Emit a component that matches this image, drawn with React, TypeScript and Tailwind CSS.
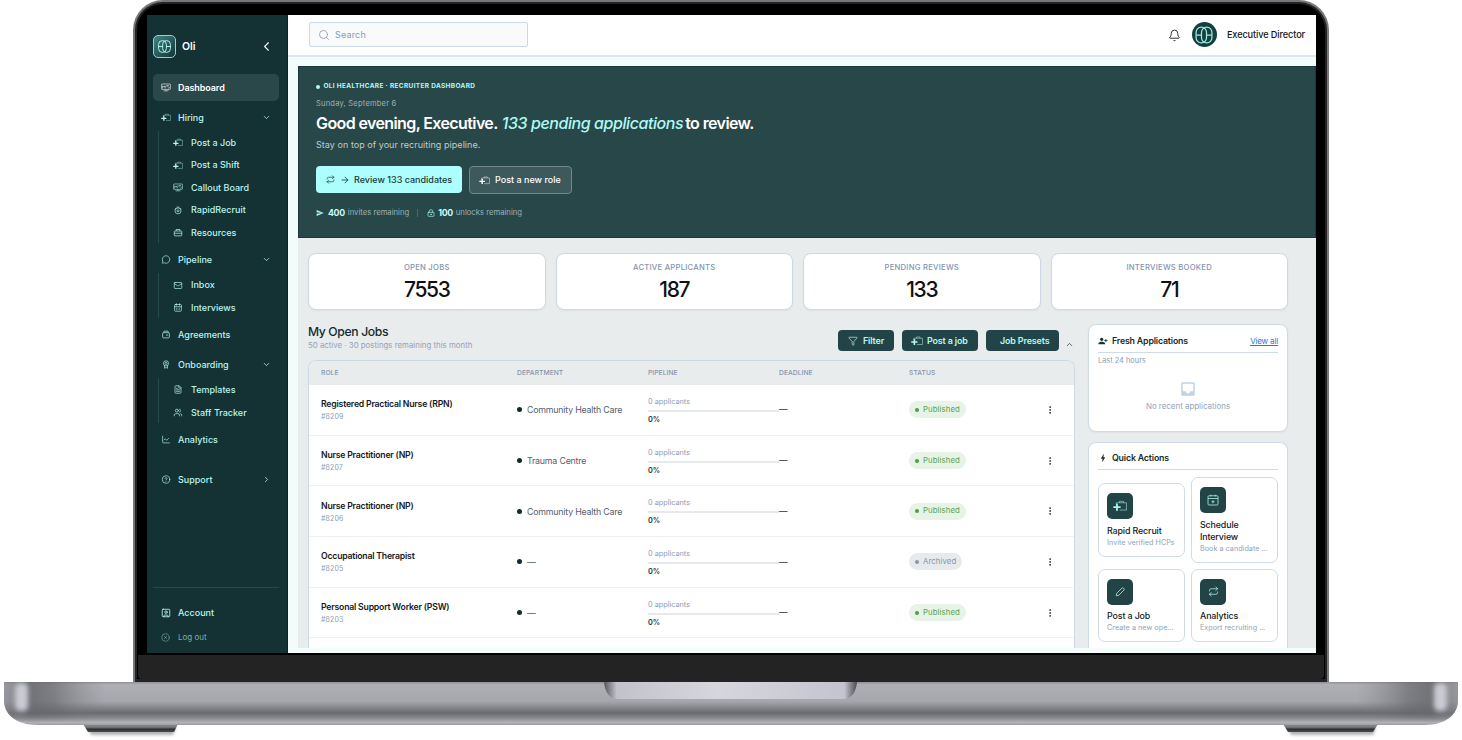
import React from 'react';
import {
  ArrowRight,
  Bell,
  CalendarDays,
  ChartLine,
  ChevronDown,
  ChevronLeft,
  ChevronRight,
  ChevronUp,
  CircleX,
  EllipsisVertical,
  FileText,
  Funnel,
  HelpCircle,
  LockKeyhole,
  Mail,
  MessageCircle,
  Repeat,
  Search,
  SquareUser,
  Users,
} from 'lucide-react';
import { MdBolt, MdInbox, MdPersonAddAlt1, MdSend } from 'react-icons/md';

type IconType = React.ComponentType<{ className?: string; strokeWidth?: number }>;

const BoardIcon: React.FC<{ className?: string }> = ({ className }) => (
  <svg viewBox="0 0 24 20" fill="none" stroke="currentColor" strokeWidth="1.4" className={className}>
    <rect x="1.5" y="1.5" width="21" height="13" rx="1" />
    <path d="M4 12V6l3 3 3-3v6M13 5h6M13 8h3M18 8l2 2-3 2M6 18h12M12 15v3" />
  </svg>
);

const CasePlusIcon: React.FC<{ className?: string }> = ({ className }) => (
  <svg viewBox="0 0 24 20" fill="none" stroke="currentColor" className={className}>
    <path d="M5.5 7V4.5H23V17H11.5" strokeWidth="1.3" opacity="0.75" />
    <path d="M11 4.5V2h7v2.5" strokeWidth="1.3" opacity="0.75" />
    <path d="M0.5 12h12.5M6.75 6v12" strokeWidth="3.2" />
  </svg>
);

const RapidIcon: React.FC<{ className?: string }> = ({ className }) => (
  <svg viewBox="0 0 24 24" fill="none" stroke="currentColor" strokeWidth="1.8" className={className}>
    <circle cx="12" cy="13" r="8" />
    <path d="M8 3h8M3 9l3-3M21 9l-3-3M9 12l3-2 3 2v2l-3 2-3-2z" />
  </svg>
);

const CaseIcon: React.FC<{ className?: string }> = ({ className }) => (
  <svg viewBox="0 0 24 24" fill="none" stroke="currentColor" strokeWidth="1.9" className={className}>
    <rect x="2" y="8" width="20" height="13" rx="2" />
    <path d="M7 8V4h10v4M2 14h20" />
  </svg>
);

const AgreementIcon: React.FC<{ className?: string }> = ({ className }) => (
  <svg viewBox="0 0 24 24" fill="none" stroke="currentColor" strokeWidth="1.9" className={className}>
    <rect x="3" y="7" width="18" height="14" rx="2.5" />
    <path d="M5 7l2-4h10l2 4M12 13.5h6" />
  </svg>
);

const AwardIcon: React.FC<{ className?: string }> = ({ className }) => (
  <svg viewBox="0 0 24 24" fill="none" stroke="currentColor" strokeWidth="1.8" className={className}>
    <circle cx="12" cy="9" r="7" />
    <circle cx="12" cy="9" r="3" />
    <path d="M8 15v7l4-2 4 2v-7" />
  </svg>
);

const CalendarAddIcon: React.FC<{ className?: string }> = ({ className }) => (
  <svg viewBox="0 0 24 24" fill="none" stroke="currentColor" strokeWidth="1.6" className={className}>
    <rect x="2" y="3.5" width="20" height="18.5" rx="2" />
    <path d="M2 9h20M7.5 1.5V5M16.5 1.5V5M12 12.5v6M9 15.5h6" />
  </svg>
);

const PenIcon: React.FC<{ className?: string }> = ({ className }) => (
  <svg viewBox="0 0 24 24" fill="none" stroke="currentColor" strokeWidth="1.9" strokeLinejoin="round" className={className}>
    <path d="M3 21l1.2-6L16.5 2.7a2.5 2.5 0 0 1 3.6 0l1.2 1.2a2.5 2.5 0 0 1 0 3.6L9 19.8z" />
  </svg>
);

const OliMark: React.FC<{ className?: string }> = ({ className }) => (
  <svg viewBox="0 0 24 24" fill="none" stroke="currentColor" strokeWidth="1.5" className={className}>
    <rect x="2.5" y="2.5" width="12.5" height="19" rx="6.25" />
    <rect x="9" y="2.5" width="12.5" height="19" rx="6.25" />
    <path d="M2.5 12H9M15 12h6.5" />
  </svg>
);

interface NavItem {
  label: string;
  icon: IconType;
}

interface NavGroup extends NavItem {
  children?: NavItem[];
  chevron?: 'down' | 'right';
  active?: boolean;
  spaced?: boolean;
}

const nav: NavGroup[] = [
  { label: 'Dashboard', icon: BoardIcon, active: true },
  {
    label: 'Hiring',
    icon: CasePlusIcon,
    chevron: 'down',
    children: [
      { label: 'Post a Job', icon: CasePlusIcon },
      { label: 'Post a Shift', icon: CasePlusIcon },
      { label: 'Callout Board', icon: BoardIcon },
      { label: 'RapidRecruit', icon: RapidIcon },
      { label: 'Resources', icon: CaseIcon },
    ],
  },
  {
    label: 'Pipeline',
    icon: MessageCircle,
    chevron: 'down',
    children: [
      { label: 'Inbox', icon: Mail },
      { label: 'Interviews', icon: CalendarDays },
    ],
  },
  { label: 'Agreements', icon: AgreementIcon },
  {
    label: 'Onboarding',
    icon: AwardIcon,
    chevron: 'down',
    children: [
      { label: 'Templates', icon: FileText },
      { label: 'Staff Tracker', icon: Users },
    ],
  },
  { label: 'Analytics', icon: ChartLine },
  { label: 'Support', icon: HelpCircle, chevron: 'right', spaced: true },
];

const stats = [
  { label: 'OPEN JOBS', value: '7553' },
  { label: 'ACTIVE APPLICANTS', value: '187' },
  { label: 'PENDING REVIEWS', value: '133' },
  { label: 'INTERVIEWS BOOKED', value: '71' },
];

const jobs = [
  { role: 'Registered Practical Nurse (RPN)', id: '#8209', department: 'Community Health Care', status: 'Published' },
  { role: 'Nurse Practitioner (NP)', id: '#8207', department: 'Trauma Centre', status: 'Published' },
  { role: 'Nurse Practitioner (NP)', id: '#8206', department: 'Community Health Care', status: 'Published' },
  { role: 'Occupational Therapist', id: '#8205', department: '—', status: 'Archived' },
  { role: 'Personal Support Worker (PSW)', id: '#8203', department: '—', status: 'Published' },
];

const quickActions: { title: string; text: string; icon: IconType; iconClass: string }[] = [
  { title: 'Rapid Recruit', text: 'Invite verified HCPs', icon: CasePlusIcon, iconClass: 'w-[14px] h-3' },
  { title: 'Schedule Interview', text: 'Book a candidate ...', icon: CalendarAddIcon, iconClass: 'size-3' },
  { title: 'Post a Job', text: 'Create a new ope...', icon: PenIcon, iconClass: 'size-[10px]' },
  { title: 'Analytics', text: 'Export recruiting ...', icon: Repeat, iconClass: 'size-[11px]' },
];

const Sidebar = () => (
  <aside className="flex w-[141px] shrink-0 flex-col border-r border-[#0a2224] bg-[#143133] pt-5 pr-2 pl-1.5 text-[#b9f5ef]">
    <div className="flex h-[23px] shrink-0 items-center">
      <div className="flex size-[23px] items-center justify-center rounded-[5px] border border-[#8fd5cf] bg-linear-to-br from-[#3f8a87] to-[#123436]">
        <OliMark className="size-[15px]" />
      </div>
      <span className="ml-1.5 text-[10.5px] font-semibold text-white">Oli</span>
      <ChevronLeft className="mr-[5px] ml-auto size-[15px] text-white" strokeWidth={1.7} />
    </div>

    <nav className="mt-4">
      {nav.map(({ label, icon: Icon, children, chevron, active, spaced }) => (
        <div key={label} className={`mb-[2.9px] ${spaced ? 'mt-[13px]' : ''}`}>
          <div
            className={`flex h-[27px] items-center rounded-[5px] px-2 text-[9px] ${
              active ? 'bg-[#2a4749] font-semibold text-white' : 'font-medium'
            }`}
          >
            <Icon className="h-[9px] w-[10px]" strokeWidth={1.7} />
            <span className={active ? 'ml-[7px] tracking-[-0.01em]' : 'ml-[7px]'}>{label}</span>
            {chevron === 'down' && <ChevronDown className="ml-auto size-[9px]" strokeWidth={2} />}
            {chevron === 'right' && <ChevronRight className="ml-auto size-[9px]" strokeWidth={2} />}
          </div>
          {children && (
            <div className="ml-[5px] border-l border-[#264a4b]">
              {children.map(({ label: childLabel, icon: ChildIcon }) => (
                <div key={childLabel} className="flex h-[22.5px] items-center pt-px pl-[14px] text-[9px] font-medium">
                  <ChildIcon className="h-[9px] w-[10px]" strokeWidth={1.8} />
                  <span className="ml-2">{childLabel}</span>
                </div>
              ))}
            </div>
          )}
        </div>
      ))}
    </nav>

    <div className="mt-auto border-t border-[#2b4748] pt-[12px] pl-2">
      <div className="flex h-[25px] items-center text-[9px] font-medium">
        <SquareUser className="size-[10px]" strokeWidth={2} />
        <span className="ml-[7px]">Account</span>
      </div>
      <div className="mb-1 flex h-6 items-center text-[8px] text-[#7fb0ac]">
        <CircleX className="size-[9px]" strokeWidth={1.6} />
        <span className="ml-2">Log out</span>
      </div>
    </div>
  </aside>
);

const Header = () => (
  <header className="flex h-[42px] shrink-0 items-center border-b-2 border-[#dde7ee] bg-white pr-[11px] pl-[21px]">
    <div className="mb-px flex h-[25px] w-[219px] items-center rounded-[2px] border border-[#cbd9e8] bg-[#f8fafc] pl-2 text-[#8c9bb5]">
      <Search className="size-3" strokeWidth={1.6} />
      <span className="mt-px ml-[5px] text-[9px] tracking-[0.02em]">Search</span>
    </div>
    <Bell className="ml-auto size-[13px] text-[#1a1f24]" strokeWidth={1.7} />
    <div className="mb-px ml-[11px] flex size-[25px] items-center justify-center rounded-full bg-[#12403f] text-[#a5e6e1]">
      <OliMark className="size-[20px]" />
    </div>
    <span className="ml-[10px] text-[9.2px] font-medium tracking-[-0.013em] text-[#111418]">Executive Director</span>
  </header>
);

const Hero = () => (
  <section className="h-[172px] shrink-0 border border-[#173b3d] bg-[#284749] pt-[15px] pl-[17px] text-white">
    <div className="flex h-[10px] items-center text-[6.5px] font-bold tracking-[0.05em] text-[#aefaf5]">
      <span className="mr-[3.5px] mb-px size-1 rounded-full bg-[#aefaf5]" />
      OLI HEALTHCARE · RECRUITER DASHBOARD
    </div>
    <p className="mt-[6px] h-3 text-[7.5px] leading-3 tracking-[0.03em] text-[#a3b3b4]">Sunday, September 6</p>
    <h1 className="mt-[3px] flex h-5 text-[16px] leading-5 font-semibold tracking-[-0.038em] whitespace-nowrap">
      <span>Good evening, Executive.</span>
      <em className="ml-1 font-medium tracking-[-0.027em] text-[#aefaf5]">133 pending applications</em>
      <span className="ml-[2px]">to review.</span>
    </h1>
    <p className="mt-[6px] h-3 text-[9px] leading-3 tracking-[0.005em] text-[#c0cbcb]">
      Stay on top of your recruiting pipeline.
    </p>
    <div className="mt-[15px] flex h-7 text-[9px] font-medium">
      <button className="flex h-[27px] w-[146px] items-center rounded-[4px] bg-[#acfffc] pl-[10px] text-[#173a3c]">
        <Repeat className="size-[9px]" strokeWidth={1.8} />
        <ArrowRight className="ml-[5px] size-[10px]" strokeWidth={2} />
        <span className="ml-1 whitespace-nowrap">Review 133 candidates</span>
      </button>
      <button className="ml-[7px] flex h-7 w-[103px] items-center rounded-[4px] border border-[#71898a] bg-[#3d595b] pl-[9px]">
        <CasePlusIcon className="h-[9px] w-[11px]" />
        <span className="ml-[5px] whitespace-nowrap">Post a new role</span>
      </button>
    </div>
    <div className="mt-3 flex h-[13px] items-center text-[7.7px] text-[#9eafb0]">
      <MdSend className="size-2 text-[#aefaf5]" />
      <b className="mr-[3px] ml-1 text-[8.8px] font-bold tracking-[-0.04em] text-[#c8fbf8]">400</b>
      <span>invites remaining</span>
      <span className="mr-[9px] ml-[8px] h-2 w-px bg-[#4a6668]" />
      <LockKeyhole className="size-2 text-[#aefaf5]" />
      <b className="mr-[3px] ml-[3px] text-[8.8px] font-bold tracking-[-0.04em] text-[#c8fbf8]">100</b>
      <span>unlocks remaining</span>
    </div>
  </section>
);

const JobsTable = () => (
  <div className="mt-[9px] min-h-0 flex-1 overflow-hidden rounded-t-[8px] border border-b-0 border-[#cdd8e6] bg-white">
    <div className="grid h-[24px] grid-cols-[196px_131px_131px_130px_1fr] items-center bg-[#e8ecec] pt-px pl-3 text-[6.7px] font-medium tracking-[0.01em] text-[#8494ae]">
      <span>ROLE</span>
      <span>DEPARTMENT</span>
      <span>PIPELINE</span>
      <span>DEADLINE</span>
      <span>STATUS</span>
    </div>
    {jobs.map((job) => (
      <div
        key={job.id}
        className="grid h-[50.7px] grid-cols-[196px_131px_131px_130px_1fr] items-center border-b border-[#f0f2f3] pl-3"
      >
        <div className="pt-px">
          <div className="text-[8.7px] leading-3 font-semibold tracking-[-0.024em] text-[#16191d]">{job.role}</div>
          <div className="mt-[2px] text-[7px] leading-[10px] tracking-[0.02em] text-[#8c9bb5]">{job.id}</div>
        </div>
        <div className="flex items-center text-[8.8px] tracking-[-0.022em] text-[#55606f]">
          <span className="mr-[5px] size-[5px] rounded-full bg-[#0f2c2d]" />
          {job.department}
        </div>
        <div className="pt-[2px]">
          <div className="text-[7.3px] leading-[10px] text-[#8c9bb5]">0 applicants</div>
          <div className="mt-[3px] h-[2px] bg-[#e6eaeb]" />
          <div className="mt-[3px] text-[7.3px] leading-[10px] font-semibold text-[#1c3335]">0%</div>
        </div>
        <span className="text-[8.5px] text-[#2d3238]">—</span>
        <div className="flex items-center justify-between pr-[19px]">
          <span
            className={`flex h-[17px] items-center rounded-full px-[6px] text-[7.8px] tracking-[0.01em] ${
              job.status === 'Published' ? 'bg-[#e6f3e6] text-[#5aa552]' : 'bg-[#e6eaec] text-[#8696ab]'
            }`}
          >
            <span
              className={`mr-[4px] size-1 rounded-full ${job.status === 'Published' ? 'bg-[#4ba144]' : 'bg-[#8696ab]'}`}
            />
            {job.status}
          </span>
          <EllipsisVertical className="size-[10px] text-[#20252b]" strokeWidth={2} />
        </div>
      </div>
    ))}
  </div>
);

const JobsPanel = () => (
  <div className="flex w-[767px] flex-col">
    <div className="flex h-[27px] items-start">
      <div>
        <h2 className="text-[12.2px] leading-[16px] font-medium tracking-[-0.03em] text-[#122b2d]">My Open Jobs</h2>
        <p className="text-[7.8px] leading-[11px] tracking-[0.003em] text-[#95a2b9]">
          50 active · 30 postings remaining this month
        </p>
      </div>
      <div className="mt-[6px] mr-px ml-auto flex items-center text-[9px] font-semibold tracking-[-0.02em] text-[#b5f7f2]">
        <button className="flex h-[21px] w-[56px] items-center rounded-[4px] bg-[#234446] pl-[10px]">
          <Funnel className="size-[10px]" strokeWidth={1.6} />
          <span className="ml-[5px]">Filter</span>
        </button>
        <button className="ml-2 flex h-[21px] w-[76px] items-center rounded-[4px] bg-[#234446] pl-[9px]">
          <CasePlusIcon className="h-[10px] w-[12px]" />
          <span className="ml-[4px] whitespace-nowrap">Post a job</span>
        </button>
        <button className="ml-2 flex h-[21px] w-[73px] items-center rounded-[4px] bg-[#234446] pl-[14px] whitespace-nowrap">
          Job Presets
        </button>
        <ChevronUp className="mt-[8px] ml-[6px] size-[9px] text-[#30363d]" strokeWidth={2} />
      </div>
    </div>
    <JobsTable />
  </div>
);

const SideCards = () => (
  <div className="ml-[13px] flex min-h-0 w-[200px] flex-col">
    <div className="h-[108px] shrink-0 rounded-[8px] border border-[#cfdae8] bg-white px-[9px] pt-2 shadow-xs">
      <div className="flex h-[20px] items-center border-b border-[#cfdbe8] pb-1">
        <MdPersonAddAlt1 className="size-[10px] text-[#173032]" />
        <h3 className="ml-1 text-[8.8px] font-semibold tracking-[-0.02em] text-[#122b2d]">Fresh Applications</h3>
        <span className="ml-auto text-[8px] tracking-[-0.02em] text-[#1a7be0] underline">View all</span>
      </div>
      <p className="mt-[2px] text-[7.4px] leading-3 text-[#8c9bb5]">Last 24 hours</p>
      <div className="mt-[13px] flex flex-col items-center">
        <MdInbox className="size-[18px] text-[#c3d0e5]" />
        <p className="mt-[2px] text-[8px] leading-3 tracking-[-0.005em] text-[#96a3ba]">No recent applications</p>
      </div>
    </div>

    <div className="mt-[10px] min-h-0 flex-1 overflow-hidden rounded-t-[8px] border border-b-0 border-[#cfdae8] bg-white px-[9px] pt-2">
      <div className="flex h-[19px] items-center border-b border-[#cfdbe8] pb-1">
        <MdBolt className="size-[10px] text-[#173032]" />
        <h3 className="ml-1 text-[8.8px] font-semibold tracking-[-0.02em] text-[#122b2d]">Quick Actions</h3>
      </div>
      <div className="mt-[7px] grid grid-cols-2 items-center gap-[6px]">
        {quickActions.map(({ title, text, icon: Icon, iconClass }) => (
          <div key={title} className="rounded-[7px] border border-[#cfdbe8] bg-white px-2 pt-[9px] pb-2">
            <div className="flex size-[26px] items-center justify-center rounded-[5px] bg-[#234446] text-[#a9f3ee]">
              <Icon className={iconClass} strokeWidth={1.7} />
            </div>
            <div className="mt-[5.5px] text-[8.9px] leading-3 font-medium tracking-[-0.015em] text-[#16191d]">{title}</div>
            <div className="text-[7.2px] leading-[11px] tracking-[0.005em] whitespace-nowrap text-[#93a1b9]">{text}</div>
          </div>
        ))}
      </div>
    </div>
  </div>
);

// Silver base with the hinge notch and rubber feet
const LaptopBase = () => (
  <svg viewBox="0 0 1462 58" className="h-[58px] w-[1462px] shrink-0">
    <defs>
      <linearGradient id="base" x1="0" y1="0" x2="0" y2="1">
        <stop offset="0" stopColor="#8f9095" />
        <stop offset="0.06" stopColor="#aeafb5" />
        <stop offset="0.45" stopColor="#a6a7ad" />
        <stop offset="0.72" stopColor="#696a6f" />
        <stop offset="0.84" stopColor="#8a8b90" />
        <stop offset="0.94" stopColor="#b2b3b9" />
        <stop offset="1" stopColor="#9c9da1" />
      </linearGradient>
      <linearGradient id="ends" x1="0" y1="0" x2="1" y2="0">
        <stop offset="0" stopColor="#8a8b90" stopOpacity="0.6" />
        <stop offset="0.08" stopColor="#77787d" stopOpacity="0.6" />
        <stop offset="0.2" stopColor="#66676b" stopOpacity="0.85" />
        <stop offset="0.4" stopColor="#66676b" stopOpacity="0.65" />
        <stop offset="0.8" stopColor="#808186" stopOpacity="0" />
      </linearGradient>
      <linearGradient id="endsFade" x1="0" y1="0" x2="0" y2="1">
        <stop offset="0" stopColor="#fff" />
        <stop offset="0.65" stopColor="#fff" />
        <stop offset="0.95" stopColor="#000" />
      </linearGradient>
      <mask id="endsMask">
        <rect width="130" height="43" fill="url(#endsFade)" />
      </mask>
      <linearGradient id="notch" x1="0" y1="0" x2="1" y2="0">
        <stop offset="0" stopColor="#55565a" />
        <stop offset="0.05" stopColor="#c2c3ca" />
        <stop offset="0.45" stopColor="#d6d7dd" />
        <stop offset="0.95" stopColor="#c4c4cf" />
        <stop offset="1" stopColor="#4b4c50" />
      </linearGradient>
      <linearGradient id="foot" x1="0" y1="0" x2="0" y2="1">
        <stop offset="0" stopColor="#8d8e92" />
        <stop offset="0.4" stopColor="#77787c" />
        <stop offset="0.65" stopColor="#2f2f31" />
        <stop offset="1" stopColor="#4d4d4f" />
      </linearGradient>
      <filter id="soft" x="-10%" y="-50%" width="120%" height="250%">
        <feGaussianBlur stdDeviation="1.5" />
      </filter>
      <filter id="glow" x="-80%" y="-30%" width="260%" height="160%">
        <feGaussianBlur stdDeviation="2.6" />
      </filter>
      <clipPath id="bodyClip">
        <path d="M4 0h1454v18c0 14-11 25-34 25H38C15 43 4 32 4 18z" />
      </clipPath>
      <g id="end">
        <path d="M4 0h126v43H4z" fill="url(#ends)" mask="url(#endsMask)" />
        <rect x="15" y="1" width="13" height="28" rx="5" fill="#c9cad3" filter="url(#glow)" />
      </g>
    </defs>
    <path d="M88 46h88l-3 7H91zM1288 46h88l-3 7h-82z" fill="#000" opacity="0.3" filter="url(#soft)" />
    <path d="M83 42h95l-4 8H88zM1283 42h95l-5 8h-85z" fill="url(#foot)" />
    <g clipPath="url(#bodyClip)">
      <rect width="1462" height="43" fill="url(#base)" />
      <use href="#end" />
      <use href="#end" transform="translate(1462 0) scale(-1 1)" />
    </g>
    <path d="M604 0h253c-1 11-6 17-14 17H618c-8 0-13-6-14-17z" fill="url(#notch)" />
  </svg>
);

const App: React.FC = () => (
  <div className="flex h-[740px] w-[1462px] flex-col items-center overflow-hidden bg-white font-[Inter,sans-serif] antialiased">
    <div className="flex h-[682px] w-[1196px] shrink-0 flex-col rounded-t-[30px] bg-[#77787c] px-[2px] pt-[2px]">
      <div className="flex flex-1 flex-col rounded-t-[28px] border-[2px] border-b-[3px] border-[#242427] bg-black">
        <div className="mx-[10px] mt-[11px] flex h-[638px] w-[1169px] overflow-hidden bg-[#f4fbfb]">
          <Sidebar />
          <div className="flex min-w-0 flex-1 flex-col">
            <Header />
            <main className="mb-[5px] ml-[10px] flex min-h-0 flex-1 flex-col bg-[#e8ecec] pt-[9px] shadow-[inset_0_9px_0_#f4fbfb]">
              <Hero />
              <div className="flex min-h-0 flex-1 flex-col pr-7 pl-[10px]">
                <div className="mt-[15px] grid grid-cols-4 gap-[10px]">
                  {stats.map((stat) => (
                    <div
                      key={stat.label}
                      className="flex h-[57px] flex-col items-center rounded-[8px] border border-[#cdd9e8] bg-white pt-2 shadow-xs"
                    >
                      <span className="text-[7.7px] leading-3 font-medium tracking-[0.03em] text-[#8494b0]">
                        {stat.label}
                      </span>
                      <span className="mt-[2px] text-[21px] leading-7 font-medium tracking-[-0.065em] text-[#0e1114]">
                        {stat.value}
                      </span>
                    </div>
                  ))}
                </div>
                <div className="mt-[14px] flex min-h-0 flex-1">
                  <JobsPanel />
                  <SideCards />
                </div>
              </div>
            </main>
          </div>
        </div>
        <div className="mx-px mt-[2px] h-[24px] rounded-b-[4px] bg-[#232323]" />
      </div>
    </div>
    <LaptopBase />
  </div>
);

export default App;
